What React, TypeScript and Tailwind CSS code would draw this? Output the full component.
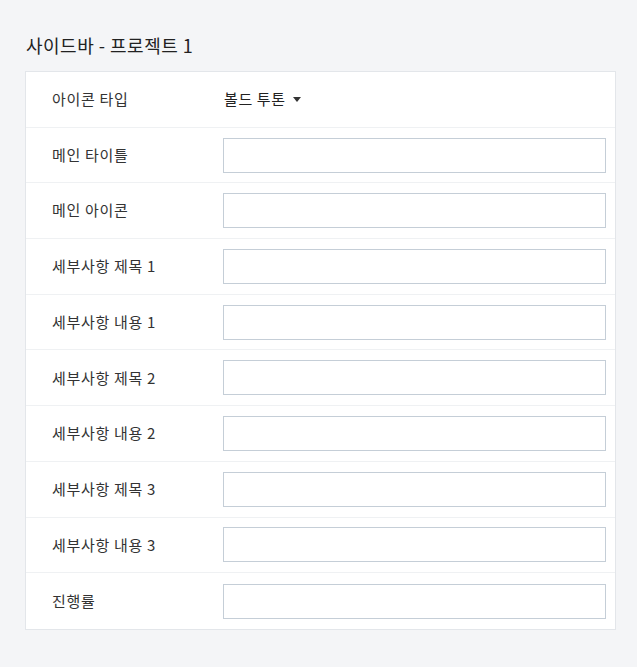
import React from "react";

const rows = [
  "메인 타이틀",
  "메인 아이콘",
  "세부사항 제목 1",
  "세부사항 내용 1",
  "세부사항 제목 2",
  "세부사항 내용 2",
  "세부사항 제목 3",
  "세부사항 내용 3",
  "진행률",
];

export default function App() {
  return (
    <div
      className="min-h-[667px] w-full bg-[#f4f5f7] px-[25px] pt-[31px]"
      style={{ fontFamily: '"Noto Sans CJK KR", "Noto Sans", sans-serif' }}
    >
      <h1 className="mb-[12px] pl-px text-[18px] leading-[28px] font-normal tracking-[0.5px] text-[#222]">
        사이드바 - 프로젝트 1
      </h1>
      <div className="w-[591px] border border-[#e3e6ea] bg-white">
        <div className="flex h-[55.7px] items-center border-b border-[#eff1f3]">
          <div className="w-[197px] pl-[26px] text-[15px] tracking-[0.7px] text-[#333]">아이콘 타입</div>
          <button className="flex items-center gap-[7px] pl-px text-[15px] tracking-[0.6px] text-[#222]">
            볼드 투톤
            <svg width="8" height="5" viewBox="0 0 8 5" className="mt-px">
              <path d="M0 0 L8 0 L4 5 Z" fill="#333" />
            </svg>
          </button>
        </div>
        {rows.map((label, i) => (
          <div
            key={label}
            className={`flex h-[55.7px] items-center pr-[9px] ${
              i < rows.length - 1 ? "border-b border-[#eff1f3]" : ""
            }`}
          >
            <div className="w-[197px] pl-[26px] text-[15px] tracking-[0.7px] text-[#333]">{label}</div>
            <input
              type="text"
              className="h-[35px] flex-1 border border-[#c5ced7] bg-white px-2 text-[14px] outline-none"
            />
          </div>
        ))}
      </div>
    </div>
  );
}
